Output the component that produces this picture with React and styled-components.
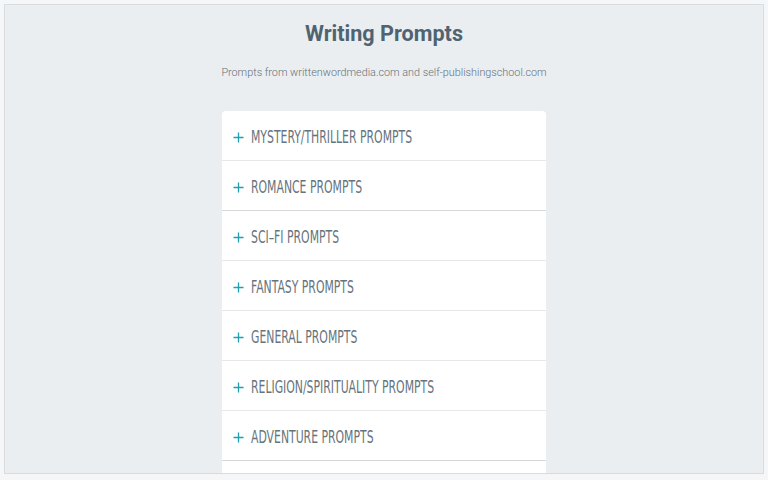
import React from "react";
import styled, { createGlobalStyle } from "styled-components";

const Global = createGlobalStyle`
  html, body { margin: 0; padding: 0; background: #f5f6f7; }
  body { font-family: Roboto, "Liberation Sans", sans-serif; }
`;

const Frame = styled.div`
  margin: 4px 4px 0 4px;
  height: 468px;
  border: 1px solid #d9dcdf;
  background: #ebeef1;
  overflow: hidden;
  display: flex;
  flex-direction: column;
  align-items: center;
`;

const Title = styled.h1`
  margin: 16px 0 0 0;
  font-family: Roboto, sans-serif;
  font-weight: 700;
  font-size: 21.6px;
  line-height: 26px;
  color: #4f6470;
`;

const Subtitle = styled.p`
  margin: 19px 0 0 0;
  font-family: Roboto, sans-serif;
  font-weight: 300;
  font-size: 10.8px;
  line-height: 14px;
  color: #63707a;
`;

const Card = styled.div`
  margin-top: 31px;
  width: 324px;
  background: #fff;
  border-radius: 4px 4px 0 0;
  flex-shrink: 0;
`;

const Row = styled.div`
  box-sizing: border-box;
  height: 50px;
  padding: 3px 0 0 11px;
  border-bottom: 1px solid ${(p) => (p.$dark ? "#d6d9dc" : "#e6e8ea")};
  display: flex;
  align-items: center;
  gap: 7px;
`;

const Label = styled.span`
  display: inline-block;
  font-family: "DejaVu Sans Condensed", "Liberation Sans", sans-serif;
  font-stretch: condensed;
  font-size: 17.5px;
  line-height: 20px;
  color: #67737c;
  white-space: nowrap;
  transform: scaleX(0.69);
  transform-origin: left center;
`;

const Plus = () => (
  <svg width="11" height="11" viewBox="0 0 11 11">
    <path d="M5.5 0.5v10M0.5 5.5h10" stroke="#1ea0b0" strokeWidth="1.3" fill="none" />
  </svg>
);

const items = [
  "MYSTERY/THRILLER PROMPTS",
  "ROMANCE PROMPTS",
  "SCI–FI PROMPTS",
  "FANTASY PROMPTS",
  "GENERAL PROMPTS",
  "RELIGION/SPIRITUALITY PROMPTS",
  "ADVENTURE PROMPTS",
];

export default function App() {
  return (
    <>
      <Global />
      <Frame>
        <Title>Writing Prompts</Title>
        <Subtitle>Prompts from writtenwordmedia.com and self-publishingschool.com</Subtitle>
        <Card>
          {items.map((t, i) => (
            <Row key={t} $dark={i === 1 || i === 6}>
              <Plus />
              <Label>{t}</Label>
            </Row>
          ))}
          <Row />
        </Card>
      </Frame>
    </>
  );
}
